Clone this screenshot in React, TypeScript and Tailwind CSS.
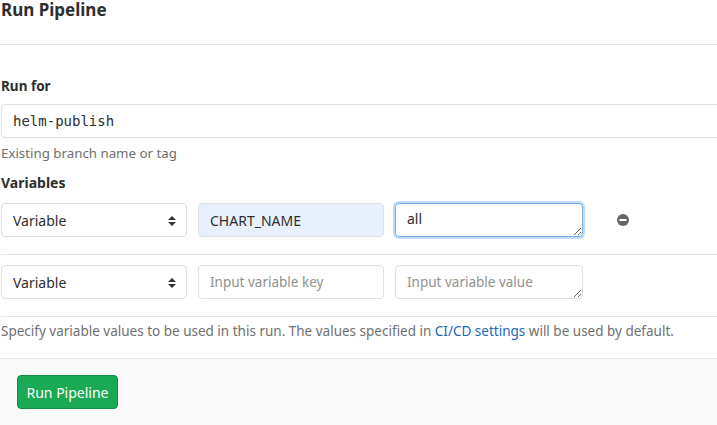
import React from "react";

const font = { fontFamily: '"Noto Sans", sans-serif' };

function SelectBox() {
  return (
    <div className="relative flex h-[34px] w-[186px] shrink-0 items-center rounded-[4px] border border-[#dfdfdf] bg-white pl-[11px] text-[14px] text-[#2e2e2e]">
      Variable
      <svg className="absolute right-[10px] top-[12px]" width="8" height="10" viewBox="0 0 8 10">
        <path d="M4 0 L8 4 L0 4 Z" fill="#333" />
        <path d="M0 6 L8 6 L4 10 Z" fill="#333" />
      </svg>
    </div>
  );
}

export default function App() {
  return (
    <div
      className="relative h-[425px] w-[717px] overflow-hidden bg-white text-[#2e2e2e]"
      style={font}
    >
      <div className="h-[44px] pl-[1px] pt-[1px]">
        <h3 className="text-[17px] font-bold leading-[18px]">Run Pipeline</h3>
      </div>
      <div className="h-px bg-[#e5e5e5]" />
      <div className="pl-[1px]">
        <div className="mt-[32px] h-[18px] text-[13.5px] font-bold leading-[18px]">Run for</div>
        <div
          className="mt-[9px] flex h-[34px] w-[730px] items-center rounded-[4px] border border-[#dfdfdf] pl-[11px] text-[14px] text-[#2e2e2e]"
          style={{ fontFamily: '"DejaVu Sans Mono", monospace' }}
        >
          helm-publish
        </div>
        <div className="mt-[6px] h-[18px] text-[13.3px] leading-[18px] text-[#707070]">Existing branch name or tag</div>
        <div className="mt-[12px] h-[18px] text-[14px] font-bold leading-[18px]">Variables</div>

        <div className="mt-[11px] flex items-center pb-[17px]">
          <SelectBox />
          <div className="ml-[11px] flex h-[34px] w-[186px] shrink-0 items-center rounded-[4px] border border-[#dfdfdf] bg-[#e8f0fe] pl-[11px] text-[14px] text-[#2e2e2e]">
            CHART_NAME
          </div>
          <textarea
            readOnly
            value="all"
            className="ml-[11px] h-[34px] w-[188px] shrink-0 resize-y rounded-[4px] border border-[#73afea] bg-white px-[11px] py-[5px] text-[14px] leading-[20px] text-[#2e2e2e] shadow-[0_0_0_2px_rgba(115,175,234,0.45)] outline-none"
            style={font}
          />
          <svg className="ml-[34px]" width="12" height="12" viewBox="0 0 12 12">
            <circle cx="6" cy="6" r="6" fill="#666" />
            <rect x="2.5" y="5" width="7" height="2" fill="#fff" />
          </svg>
        </div>
      </div>
      <div className="ml-[1px] h-px bg-[#e5e5e5]" />
      <div className="pl-[1px]">
        <div className="mt-[10px] flex items-center pb-[17px]">
          <SelectBox />
          <input
            readOnly
            placeholder="Input variable key"
            className="ml-[11px] h-[34px] w-[186px] shrink-0 rounded-[4px] border border-[#dfdfdf] bg-white pl-[11px] text-[13.5px] text-[#2e2e2e] outline-none placeholder:text-[#919191]"
            style={font}
          />
          <textarea
            readOnly
            placeholder="Input variable value"
            className="ml-[11px] h-[34px] w-[188px] shrink-0 resize-y rounded-[4px] border border-[#dfdfdf] bg-white px-[11px] py-[6px] text-[13.5px] leading-[20px] text-[#2e2e2e] outline-none placeholder:text-[#919191]"
            style={font}
          />
        </div>
      </div>
      <div className="ml-[1px] h-px bg-[#e5e5e5]" />
      <div className="mt-[4px] h-[20px] pl-[1px] text-[13.5px] leading-[20px] text-[#707070]">
        Specify variable values to be used in this run. The values specified in{" "}
        <a className="text-[#1b69b6]">CI/CD settings</a> will be used by default.
      </div>
      <div className="mt-[17px] h-[100px] border-t border-[#e5e5e5] bg-[#fafafa] pl-[17px] pt-[16px]">
        <button
          className="flex h-[34px] w-[101px] items-center justify-center rounded-[4px] border border-[#168f48] bg-[#1aaa55] text-[14px] text-white"
          style={font}
        >
          Run Pipeline
        </button>
      </div>
    </div>
  );
}
